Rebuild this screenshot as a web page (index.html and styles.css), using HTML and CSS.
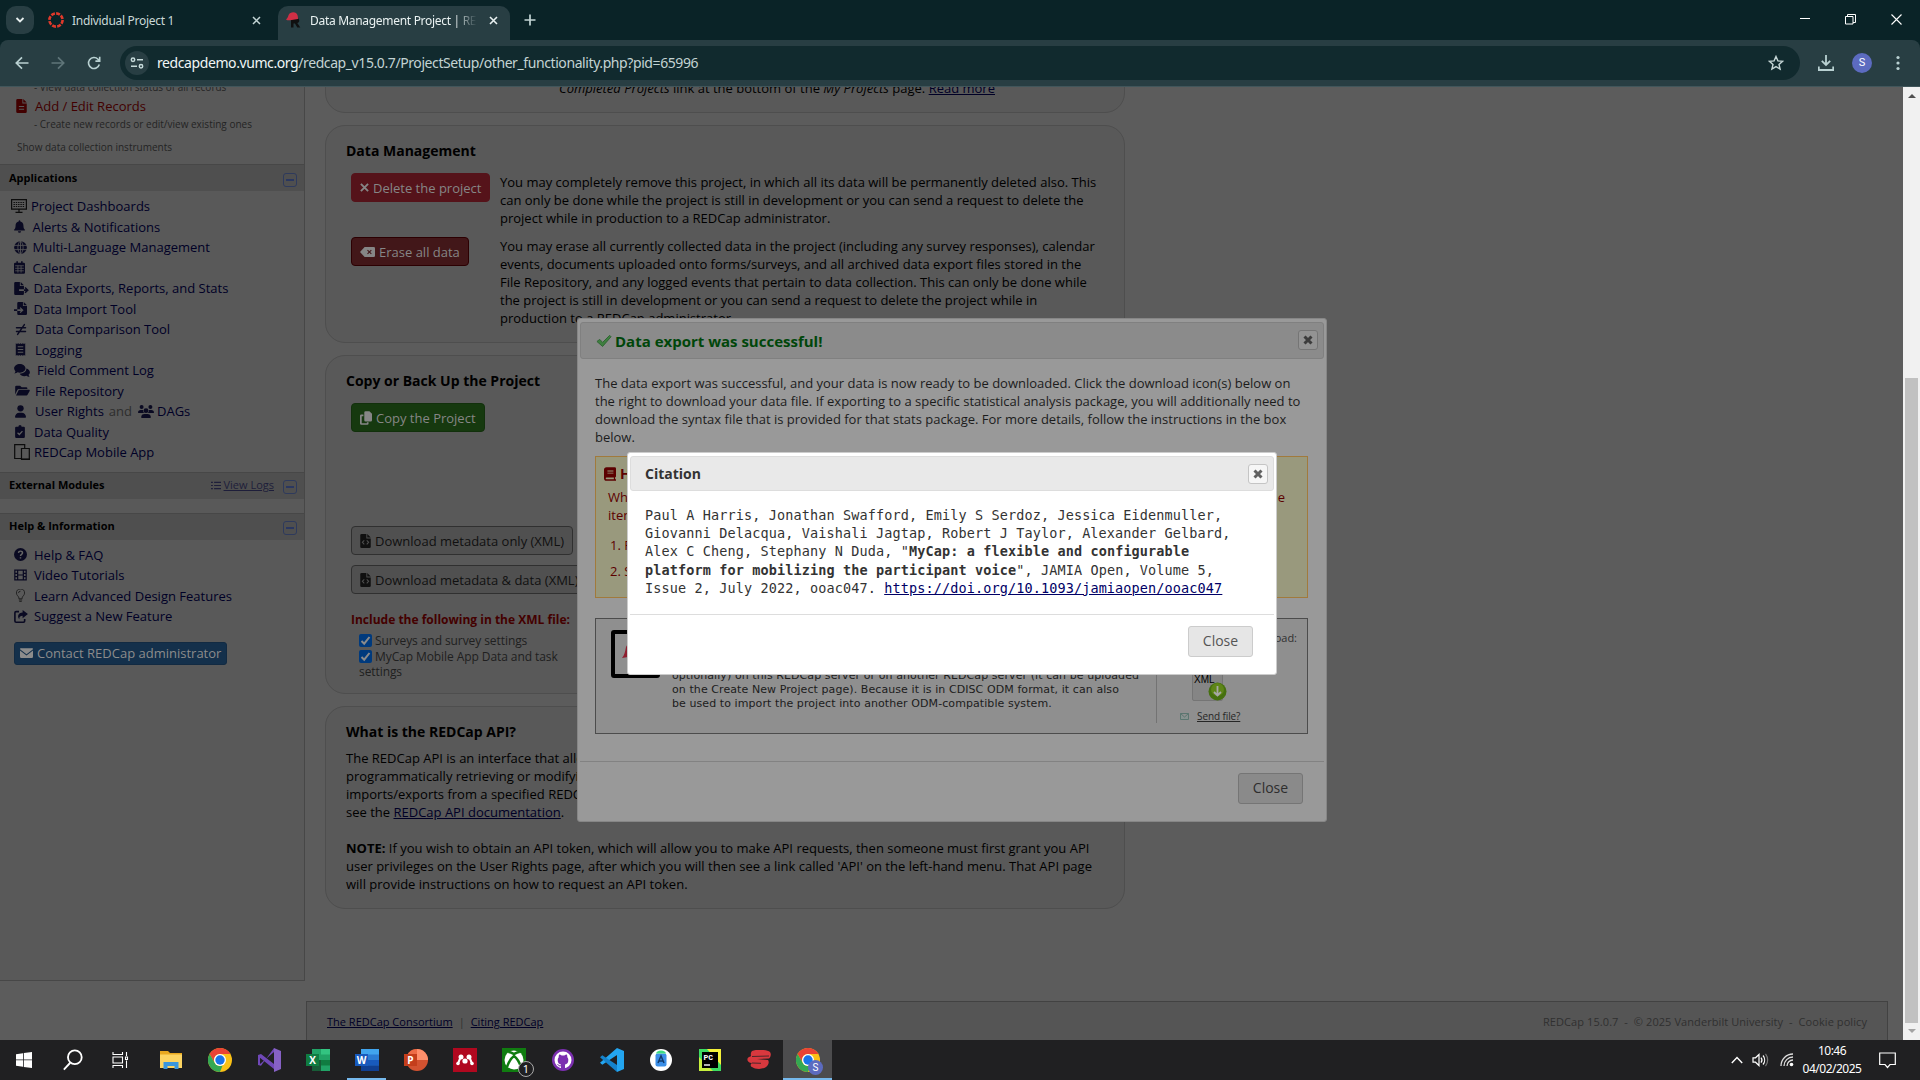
FILE: index.html
```html
<!DOCTYPE html>
<html lang="en">
<head>
<meta charset="utf-8">
<title>Data Management Project | REDCap</title>
<link rel="stylesheet" href="styles.css">
</head>
<body>
<svg class="defs" aria-hidden="true">
  <symbol id="file" viewBox="0 0 12 16"><path d="M2 0h5v5h5v9.500a1.500 1.500 0 0 1-1.500 1.500h-9A1.500 1.500 0 0 1 0 14.500v-13A1.500 1.500 0 0 1 1.500 0zM8 0l4 4H8zM3 8v1.200h6V8zm0 3v1.200h6V11z" fill-rule="evenodd"/></symbol>
  <symbol id="code" viewBox="0 0 12 16"><path d="M1.500 0H7v5h5v9.500a1.500 1.500 0 0 1-1.500 1.500h-9A1.500 1.500 0 0 1 0 14.500v-13A1.500 1.500 0 0 1 1.500 0zM8 0l4 4H8zM5 7.600L4.200 6.800 1.600 9.500l2.600 2.700.8-.8-1.800-1.900zm2 0l1.800 1.900L7 11.400l.8.8 2.600-2.700-2.600-2.700z" fill-rule="evenodd"/></symbol>
  <symbol id="board" viewBox="0 0 16 14"><path d="M.6.6h14.800v9.600H.6zM8 10v3M4.500 13.300h7" fill="none" stroke="currentColor" stroke-width="1.200"/><path d="M2.500 3.500h11M2.500 5.500h11M2.500 7.500h11" stroke="currentColor" stroke-width="1.200" stroke-dasharray="1.400 .9"/></symbol>
  <symbol id="bell" viewBox="0 0 14 16"><path d="M7 0a1 1 0 0 1 1 1v.7c2.300.5 4 2.500 4 4.900 0 3 .8 4.200 1.700 5.200.5.600.1 1.400-.7 1.400H1c-.8 0-1.200-.8-.7-1.400C1.200 10.800 2 9.600 2 6.600c0-2.400 1.700-4.400 4-4.900V1a1 1 0 0 1 1-1zM5 14h4a2 2 0 0 1-4 0z"/></symbol>
  <symbol id="globe" viewBox="0 0 16 16"><circle cx="8" cy="8" r="7.800"/><path d="M0 5.400h16M0 10.600h16M8 0v16M8 0C3.700 3 3.700 13 8 16M8 0c4.300 3 4.300 13 0 16" fill="none" stroke="#595959" stroke-width="1"/></symbol>
  <symbol id="cal" viewBox="0 0 14 16"><path d="M3 0h2v2h4V0h2v2h1.500A1.500 1.500 0 0 1 14 3.500v11a1.500 1.500 0 0 1-1.500 1.500h-11A1.500 1.500 0 0 1 0 14.500v-11A1.500 1.500 0 0 1 1.500 2H3z"/><path d="M1.500 5.800h11M1.500 9h11M1.500 12.200h11M5 5.500v9M9 5.500v9" stroke="#595959" stroke-width="1" fill="none"/></symbol>
  <symbol id="export" viewBox="0 0 18 16"><path d="M1.500 0H7v5h5v4H6v2h6v3.500a1.500 1.500 0 0 1-1.500 1.500h-9A1.500 1.500 0 0 1 0 14.500v-13A1.500 1.500 0 0 1 1.500 0zM8 0l4 4H8zM12 9h2.200l-1.500-1.600 1.300-1.200L18 10l-4 3.800-1.300-1.200 1.500-1.600H12z"/></symbol>
  <symbol id="import" viewBox="0 0 16 16"><path d="M5.500 0H11v5h5v9.500a1.500 1.500 0 0 1-1.500 1.500h-9A1.500 1.500 0 0 1 4 14.500V11h4.500L7 12.500l1 1 3.800-3.500L8 6.500l-1 1L8.500 9H4V1.500A1.500 1.500 0 0 1 5.500 0zM12 0l4 4h-4zM0 9h4v2H0z"/></symbol>
  <symbol id="neq" viewBox="0 0 16 16"><path d="M2 5.500h12M2 10.500h12M12.500 1.500l-9 13" stroke="currentColor" stroke-width="2" stroke-linecap="round"/></symbol>
  <symbol id="log" viewBox="0 0 14 16"><path d="M1 0l1.500 1L4 0l1.500 1L7 0l1.500 1L10 0l1.500 1L13 0v16l-1.500-1-1.500 1-1.500-1L7 16l-1.500-1L4 16l-1.500-1L1 16zM3.500 4v1.200h7V4zm0 3.400v1.200h7V7.400zm0 3.400V12h7v-1.200z" fill-rule="evenodd"/></symbol>
  <symbol id="chat" viewBox="0 0 18 16"><path d="M6.500 1C10 1 13 3.200 13 6s-3 5-6.500 5c-.9 0-1.800-.1-2.600-.4C3 11.300 1.700 12 .3 12c.6-.7 1.100-1.700 1.200-2.600C.6 8.500 0 7.300 0 6c0-2.800 3-5 6.500-5zM14 6.200c2.300.6 4 2.300 4 4.300 0 1.200-.6 2.200-1.500 3 .1.900.6 1.700 1.200 2.300-1.400 0-2.600-.6-3.500-1.200-.8.300-1.600.4-2.500.4-2.400 0-4.500-1.100-5.300-2.800C10.500 12 14 9.800 14 6.200z"/></symbol>
  <symbol id="folder" viewBox="0 0 18 16"><path d="M0 13V3.500A1.500 1.500 0 0 1 1.500 2H6l2 2h5.500A1.500 1.500 0 0 1 15 5.500V6H4.500a2 2 0 0 0-1.700 1zM4.500 7H17c.8 0 1.200.8.800 1.500l-2.600 4.700c-.3.500-.7.800-1.300.8H1z"/></symbol>
  <symbol id="user" viewBox="0 0 14 16"><circle cx="7" cy="4" r="4"/><path d="M5.500 9.500h3A5.500 5.500 0 0 1 14 15a1 1 0 0 1-1 1H1a1 1 0 0 1-1-1 5.500 5.500 0 0 1 5.500-5.500z"/></symbol>
  <symbol id="users" viewBox="0 0 20 16"><circle cx="4.500" cy="2.500" r="2.500"/><circle cx="15.500" cy="2.500" r="2.500"/><circle cx="10" cy="7" r="3"/><path d="M0 9.500A3.500 3.500 0 0 1 3.500 6h2c.3 0 .7.100 1 .2-.2 1.500.3 2.800 1.300 3.800H.600zM20 9.500A3.500 3.500 0 0 0 16.500 6h-2c-.3 0-.7.100-1 .2.200 1.500-.3 2.800-1.300 3.800h7.200zM4 15.300A4.300 4.300 0 0 1 8.300 11h3.400a4.300 4.300 0 0 1 4.300 4.300c0 .4-.3.700-.7.700H4.700c-.4 0-.7-.3-.7-.7z"/></symbol>
  <symbol id="clip" viewBox="0 0 12 16"><path d="M4 2a2 2 0 0 1 4 0h2.500A1.500 1.500 0 0 1 12 3.500v11a1.500 1.500 0 0 1-1.500 1.500h-9A1.500 1.500 0 0 1 0 14.500v-11A1.500 1.500 0 0 1 1.500 2z"/><path d="M3 9.500l2.200 2.200L9 7.500" fill="none" stroke="#5f5f5f" stroke-width="1.500"/></symbol>
  <symbol id="mobile" viewBox="0 0 16 16"><path d="M7 14.500H.7V.7h10V4M7.500 4.500h7.800v10.800H7.500z" fill="none" stroke="currentColor" stroke-width="1.200"/><path d="M7 15.300h9" stroke="currentColor" stroke-width="1.500"/></symbol>
  <symbol id="help" viewBox="0 0 16 16"><circle cx="8" cy="8" r="8"/><path d="M5.500 6c.2-3 5.200-2.800 5 .1C10.300 7.800 8 7.900 8 9.800M8 11.300v1.700" fill="none" stroke="#666" stroke-width="1.800"/></symbol>
  <symbol id="film" viewBox="0 0 16 14"><path d="M1 1h14v12H1zM4.500 1v12M11.500 1v12M4.500 7h7M1 5h3.500M1 9h3.500M11.500 5H15M11.500 9H15" fill="none" stroke="currentColor" stroke-width="1.500"/></symbol>
  <symbol id="bulb" viewBox="0 0 12 16"><path d="M4 12V11C4 9 1 8 1 5a5 5 0 0 1 10 0c0 3-3 4-3 6v1zM4 13.500h4M4.500 15.300h3M3.500 5A2.500 2.500 0 0 1 6 2.700" fill="none" stroke="currentColor" stroke-width="1.200"/></symbol>
  <symbol id="share" viewBox="0 0 17 16"><path d="M6 2H2.500A1.500 1.500 0 0 0 1 3.500v10A1.500 1.500 0 0 0 2.500 15h9a1.500 1.500 0 0 0 1.500-1.500V11" fill="none" stroke="currentColor" stroke-width="2"/><path d="M10.500 0L17 5l-6.500 5V7C7.500 7 6 8.500 6.500 11.500 3.500 8 5 3 10.500 3z"/></symbol>
  <symbol id="mail" viewBox="0 0 16 12"><path d="M1.500 0h13A1.500 1.500 0 0 1 16 1.300L8 7.500 0 1.300A1.500 1.500 0 0 1 1.500 0zM0 2.800l8 6.200 8-6.200V10.500a1.500 1.500 0 0 1-1.500 1.500h-13A1.500 1.500 0 0 1 0 10.500z"/></symbol>
  <symbol id="list" viewBox="0 0 16 14"><path d="M0 2h3M0 7h3M0 12h3M5 2h11M5 7h11M5 12h11" stroke="currentColor" stroke-width="1.800"/></symbol>
  <symbol id="times" viewBox="0 0 10 10"><path d="M1 1l8 8M9 1L1 9" stroke="currentColor" stroke-width="2.100"/></symbol>
  <symbol id="erase" viewBox="0 0 18 12"><path d="M5.500 0h11A1.500 1.500 0 0 1 18 1.500v9a1.500 1.500 0 0 1-1.500 1.500h-11L0 6z"/><path d="M9 3.700l4.600 4.600M13.600 3.700L9 8.300" stroke="#421719" stroke-width="1.300"/></symbol>
  <symbol id="copy" viewBox="0 0 14 16"><path d="M6.500 0H11l3 3v7.500a1.500 1.500 0 0 1-1.500 1.500h-6A1.500 1.500 0 0 1 5 10.500v-9A1.500 1.500 0 0 1 6.500 0zM1.500 4H4v2H2v8h6v-1h2v1.500A1.500 1.500 0 0 1 8.500 16h-7A1.500 1.500 0 0 1 0 14.500v-9A1.500 1.500 0 0 1 1.500 4z"/></symbol>
  <symbol id="book" viewBox="0 0 14 16"><path d="M3 0h9.500A1.500 1.500 0 0 1 14 1.500v9c0 .6-.4 1-1 1.300V14h1v2H3a3 3 0 0 1-3-3V3a3 3 0 0 1 3-3zM3 12a1 1 0 0 0 0 2h8.500v-2zM4 4v1h7V4zm0 2.500v1h7v-1z" fill-rule="evenodd"/></symbol>
  <symbol id="xclose" viewBox="0 0 10 10"><path d="M1.500 1.500l7 7M8.500 1.500l-7 7" stroke="currentColor" stroke-width="3"/></symbol>
  <symbol id="chrome" viewBox="0 0 24 24"><circle cx="12" cy="12" r="12" fill="#fbc116"/><path d="M1.600 6A12 12 0 0 1 22.400 6H12a6 6 0 0 0-5.200 9z" fill="#ea4335"/><path d="M1.600 6l5.200 9a6 6 0 0 0 7.800 2.400L12 24A12 12 0 0 1 1.600 6z" fill="#34a853"/><circle cx="12" cy="12" r="6" fill="#fff"/><circle cx="12" cy="12" r="4.700" fill="#1a73e8"/></symbol>
</svg>

<div class="screen">
  <header class="tabs">
    <span class="tabmenu"><svg width="10" height="10" viewBox="0 0 10 10"><path d="M1.500 3l3.500 3.500L8.500 3" fill="none" stroke="#e6eeee" stroke-width="1.800"/></svg></span>
    <div class="tab">
      <svg width="16" height="16" viewBox="0 0 16 16"><circle cx="8" cy="8" r="6.600" fill="none" stroke="#e0392b" stroke-width="2.600" stroke-dasharray="3.900 1.280"/></svg>
      <span class="tabtext">Individual Project 1</span>
      <svg class="tx" width="9" height="9" viewBox="0 0 9 9"><path d="M1 1l7 7M8 1L1 8" stroke="#c3d5d5" stroke-width="1.500"/></svg>
    </div>
    <div class="tab active">
      <svg width="16" height="16" viewBox="0 0 16 16"><path d="M5 6h5.500c3.500 0 3.600 4.500.8 5l3 4.500h-3L9 11.500H7.500v4H5z" fill="#101010"/><path d="M0 7.500C1.500 6 2 5 2.600 3 3.500.2 8-.5 10 1c1.800 1.300 2 4 2 6L4 8.300C2.500 8.500 1 8.300 0 7.500z" fill="#cf2f45"/></svg>
      <span class="tabtext fade">Data Management Project | REDCap</span>
      <svg class="tx" width="9" height="9" viewBox="0 0 9 9"><path d="M1 1l7 7M8 1L1 8" stroke="#e8f0f0" stroke-width="1.600"/></svg>
    </div>
    <svg class="plus" width="12" height="12" viewBox="0 0 12 12"><path d="M6 .5v11M.5 6h11" stroke="#c3d5d5" stroke-width="1.700"/></svg>
    <div class="winctl">
      <svg width="10" height="11" viewBox="0 0 10 11"><path d="M0 4.500h10" stroke="#fff"/></svg>
      <svg width="11" height="11" viewBox="0 0 11 11"><path d="M.5 2.500h7.500v7.500H.5zM2.500 2.500v-2h8v8H8" fill="none" stroke="#fff"/></svg>
      <svg width="11" height="11" viewBox="0 0 11 11"><path d="M.5.5l10 10M10.500.5l-10 10" stroke="#fff" stroke-width="1.100"/></svg>
    </div>
  </header>

  <div class="toolbar">
    <svg width="14" height="14" viewBox="0 0 14 14"><path d="M13.500 7H1.500M7 1.300L1.300 7 7 12.700" fill="none" stroke="#b9d1d2" stroke-width="1.700"/></svg>
    <svg width="14" height="14" viewBox="0 0 14 14"><path d="M.5 7h12M7 1.300L12.700 7 7 12.700" fill="none" stroke="#5f7579" stroke-width="1.700"/></svg>
    <svg width="14" height="14" viewBox="0 0 14 14"><path d="M12.300 8.500A5.500 5.500 0 1 1 11 3.200L12.500 4.800M12.700.8v4.300H8.400" fill="none" stroke="#b9d1d2" stroke-width="1.600"/></svg>
    <div class="omni">
      <span class="site"><svg width="14" height="12" viewBox="0 0 14 12"><g fill="none" stroke="#c6dada" stroke-width="1.500"><circle cx="3" cy="2.800" r="1.700"/><path d="M7 2.800h6M1 9.200h6"/><circle cx="11" cy="9.200" r="1.700"/></g></svg></span>
      <span class="url"><b>redcapdemo.vumc.org</b>/redcap_v15.0.7/ProjectSetup/other_functionality.php?pid=65996</span>
      <svg class="star" width="16" height="16" viewBox="0 0 16 16"><path d="M8 1.500l1.900 4.400 4.700.4-3.600 3.100 1.100 4.700L8 11.600l-4.100 2.500L5 9.400 1.400 6.300l4.700-.4z" fill="none" stroke="#c6d6d6" stroke-width="1.400"/></svg>
    </div>
    <svg class="dl" width="16" height="16" viewBox="0 0 16 16"><path d="M8 0v9.500M3.800 5.800L8 10l4.200-4.200M.8 11.500V15h14.400v-3.500" fill="none" stroke="#b9d1d2" stroke-width="1.800"/></svg>
    <span class="avatar">S</span>
    <svg class="dots" width="4" height="16" viewBox="0 0 4 16" fill="#b9d1d2"><circle cx="2" cy="2.500" r="1.600"/><circle cx="2" cy="8" r="1.600"/><circle cx="2" cy="13.500" r="1.600"/></svg>
  </div>

  <div class="view">
    <nav class="side">
      <div class="sub first">- View data collection status of all records</div>
      <div class="addedit"><svg width="11" height="14"><use href="#file"/></svg>Add / Edit Records</div>
      <div class="sub">- Create new records or edit/view existing ones</div>
      <div class="sub show">Show data collection instruments</div>
      <div class="shead">Applications<span class="minus"></span></div>
      <div class="menu">
        <a class="p"><i><svg class="dark" width="16" height="14"><use href="#board"/></svg></i>Project Dashboards</a>
        <a class="a"><i><svg width="11" height="13"><use href="#bell"/></svg></i>Alerts &amp; Notifications</a>
        <a class="a"><i><svg width="13" height="13"><use href="#globe"/></svg></i>Multi-Language Management</a>
        <a class="a"><i><svg width="11" height="13"><use href="#cal"/></svg></i>Calendar</a>
        <a class="b"><i><svg width="15" height="13"><use href="#export"/></svg></i>Data Exports, Reports, and Stats</a>
        <a class="b"><i><svg width="13" height="13"><use href="#import"/></svg></i>Data Import Tool</a>
        <a class="c"><i><svg width="12" height="13"><use href="#neq"/></svg></i>Data Comparison Tool</a>
        <a class="c"><i><svg width="11" height="13"><use href="#log"/></svg></i>Logging</a>
        <a class="d"><i><svg width="16" height="14"><use href="#chat"/></svg></i>Field Comment Log</a>
        <a class="c"><i><svg width="15" height="13"><use href="#folder"/></svg></i>File Repository</a>
        <a class="c"><i><svg width="11" height="13"><use href="#user"/></svg></i>User Rights<em>and</em><svg class="dags" width="16" height="13"><use href="#users"/></svg>DAGs</a>
        <a><i><svg width="12" height="13"><use href="#clip"/></svg></i>Data Quality</a>
        <a><i><svg class="dark" width="16" height="16"><use href="#mobile"/></svg></i>REDCap Mobile App</a>
      </div>
      <div class="shead ext">External Modules<span class="logs"><svg width="10" height="9"><use href="#list"/></svg><u>View Logs</u></span><span class="minus"></span></div>
      <div class="shead">Help &amp; Information<span class="minus"></span></div>
      <div class="menu help">
        <a><i><svg width="13" height="13"><use href="#help"/></svg></i>Help &amp; FAQ</a>
        <a><i><svg width="13" height="12"><use href="#film"/></svg></i>Video Tutorials</a>
        <a><i><svg class="grey" width="13" height="13"><use href="#bulb"/></svg></i>Learn Advanced Design Features</a>
        <a><i><svg width="14" height="13"><use href="#share"/></svg></i>Suggest a New Feature</a>
      </div>
      <div class="contact"><svg width="13" height="10"><use href="#mail"/></svg>Contact REDCap administrator</div>
    </nav>

    <main class="main">
      <section class="card top"><p><i>Completed Projects</i> link at the bottom of the <i>My Projects</i> page. <u>Read more</u></p></section>

      <section class="card dm">
        <h2>Data Management</h2>
        <div class="row r1">
          <div class="btncol"><span class="btn red"><svg width="9" height="9"><use href="#times"/></svg>Delete the project</span></div>
          <p>You may completely remove this project, in which all its data will be permanently deleted also. This<br>can only be done while the project is still in development or you can send a request to delete the<br>project while in production to a REDCap administrator.</p>
        </div>
        <div class="row">
          <div class="btncol"><span class="btn darkred"><svg width="15" height="10"><use href="#erase"/></svg>Erase all data</span></div>
          <p>You may erase all currently collected data in the project (including any survey responses), calendar<br>events, documents uploaded onto forms/surveys, and all archived data export files stored in the<br>File Repository, and any logged events that pertain to data collection. This can only be done while<br>the project is still in development or you can send a request to delete the project while in<br>production to a REDCap administrator.</p>
        </div>
      </section>

      <section class="card backup">
        <h2>Copy or Back Up the Project</h2>
        <span class="btn green"><svg width="12" height="14"><use href="#copy"/></svg>Copy the Project</span>
        <span class="btn plain m1"><svg width="11" height="14"><use href="#code"/></svg>Download metadata only (XML)</span>
        <span class="btn plain"><svg width="11" height="14"><use href="#code"/></svg>Download metadata &amp; data (XML)</span>
        <div class="incl">Include the following in the XML file:</div>
        <div class="opts">
          <div><span class="cb"><svg width="11" height="11" viewBox="0 0 11 11"><path d="M1.500 6l2.700 2.700L9.500 2" fill="none" stroke="#8b8b8b" stroke-width="2"/></svg></span>Surveys and survey settings</div>
          <div><span class="cb"><svg width="11" height="11" viewBox="0 0 11 11"><path d="M1.500 6l2.700 2.700L9.500 2" fill="none" stroke="#8b8b8b" stroke-width="2"/></svg></span>MyCap Mobile App Data and task</div>
          <div>settings</div>
        </div>
      </section>

      <section class="card api">
        <h2>What is the REDCap API?</h2>
        <p>The REDCap API is an interface that allows external<br>programmatically retrieving or modifying data<br>imports/exports from a specified REDCap project<br>see the <u>REDCap API documentation</u>.</p>
        <p><b>NOTE:</b> If you wish to obtain an API token, which will allow you to make API requests, then someone must first grant you API<br>user privileges on the User Rights page, after which you will then see a link called 'API' on the left-hand menu. That API page<br>will provide instructions on how to request an API token.</p>
      </section>
      <footer class="foot"><span><u>The REDCap Consortium</u><em>|</em><u>Citing REDCap</u></span><span class="ver">REDCap 15.0.7 &nbsp;-&nbsp; © 2025 Vanderbilt University &nbsp;-&nbsp; Cookie policy</span></footer>
    </main>

    <div class="scroll"><span class="up"></span><span class="thumb"></span><span class="down"></span></div>
  </div>

  <div class="taskbar">
    <span class="app"><svg width="16" height="16" viewBox="0 0 16 16" fill="#fff"><path d="M0 2.200l7-1v6.300H0zM7.800 1.100L16 0v7.500H7.800zM0 8.300h7v6.400l-7-1zM7.800 8.300H16V16l-8.200-1.100z"/></svg></span>
    <span class="app"><svg width="22" height="22" viewBox="0 0 24 24" fill="none" stroke="#fff" stroke-width="2"><circle cx="14" cy="9" r="7.500"/><path d="M9 15l-7 7.500"/></svg></span>
    <span class="app tv"><svg width="17" height="16" viewBox="0 0 17 16" fill="none" stroke="#fff" stroke-width="1.100"><path d="M1 0v2.500h9.500V0M1 16v-2.500h9.500V16M1 5h9.500v6H1zM14.500 0v4M14.500 8.500V16"/><path d="M13.500 5h2v2.500h-2z"/></svg></span>
    <span class="app"><svg width="22" height="20" viewBox="0 0 22 20"><path d="M0 1h8l2 2h12v15H0z" fill="#e8a820"/><path d="M0 4.500h22V18H0z" fill="#fcd462"/><path d="M3.500 19v-7h15v7h-4v-3h-7v3z" fill="#3a96dd"/></svg></span>
    <span class="app"><svg width="24" height="24"><use href="#chrome"/></svg></span>
    <span class="app"><svg width="24" height="24" viewBox="0 0 24 24"><path d="M17 0l7 3v18l-7 3z" fill="#8661c5"/><path d="M1 7l3-1 13 10v5L2 9v7l-1-.8zM1 17V7l2 1v8l14-12V0L4 17.800z" fill="#7048b8"/></svg></span>
    <span class="app"><svg width="24" height="22" viewBox="0 0 24 22"><path d="M6 0h18v22H6z" fill="#21a366"/><path d="M6 11h9v11H6z" fill="#185c37"/><path d="M15 11h9v5.500h-9z" fill="#107c41"/><path d="M15 0h9v5.500h-9z" fill="#33c481"/><path d="M0 5h13v12H0z" fill="#107c41"/><text x="6.500" y="14.800" class="office">X</text></svg></span>
    <span class="app run"><svg width="24" height="22" viewBox="0 0 24 22"><path d="M6 0h18v22H6z" fill="#2b7cd3"/><path d="M6 0h18v5.500H6z" fill="#41a5ee"/><path d="M6 11h18v5.500H6z" fill="#185abd"/><path d="M6 16.500h18V22H6z" fill="#103f91"/><path d="M0 5h13v12H0z" fill="#185abd"/><text x="6.500" y="14.800" class="office">W</text></svg></span>
    <span class="app"><svg width="24" height="22" viewBox="0 0 24 22"><circle cx="13" cy="11" r="11" fill="#d35230"/><path d="M13 0a11 11 0 0 1 11 11H13z" fill="#ff8f6b"/><path d="M13 0v11H2A11 11 0 0 1 13 0z" fill="#ed6c47"/><path d="M0 5h13v12H0z" fill="#c43e1c"/><text x="6.500" y="14.800" class="office">P</text></svg></span>
    <span class="app"><svg width="24" height="24" viewBox="0 0 24 24"><path d="M0 0h24v24H0z" fill="#b0081f"/><g fill="#fff"><circle cx="8" cy="9" r="2.500"/><circle cx="16" cy="9" r="2.500"/><circle cx="5" cy="15.500" r="1.800"/><circle cx="12" cy="13" r="2.600"/><circle cx="19" cy="15.500" r="1.800"/></g><path d="M5 15.500l2.500-6M19 15.500l-2.500-6" stroke="#fff" stroke-width="2"/></svg></span>
    <span class="app xb"><svg width="24" height="24" viewBox="0 0 24 24"><path d="M0 0h24v24H0z" fill="#107c10"/><circle cx="12" cy="12" r="9.500" fill="#fff"/><path d="M5 19C7 13 10 9.500 12 8c2 1.500 5 5 7 11M6 4c2-.5 4 .8 6 2 2-1.200 4-2.500 6-2" fill="none" stroke="#107c10" stroke-width="2.500"/></svg><span class="count">1</span></span>
    <span class="app"><svg width="22" height="22" viewBox="0 0 22 22"><circle cx="11" cy="11" r="11" fill="#7b2fb0"/><circle cx="11" cy="11" r="8.500" fill="#fff"/><path d="M9 20v-4.500c-2-.5-3.300-1.500-3.300-4.500 0-1.200.4-2 1-2.700-.1-.9 0-1.900.4-2.800 1 0 1.800.5 2.600 1a9 9 0 0 1 2.600 0c.8-.5 1.600-1 2.600-1 .4.900.5 1.900.4 2.800.6.700 1 1.500 1 2.700 0 3-1.300 4-3.300 4.500V20z" fill="#7b2fb0"/><path d="M5.500 15l1.500 1.800H9" fill="none" stroke="#7b2fb0"/></svg></span>
    <span class="app"><svg width="24" height="24" viewBox="0 0 24 24"><path d="M0 14.800L17 0v7L2.300 16.800zM17 0l7 3v18l-7 3z" fill="#23a5f0"/><path d="M0 9.200L17 24v-7L2.300 7.200z" fill="#1583cc"/></svg></span>
    <span class="app"><svg width="22" height="22" viewBox="0 0 22 22"><circle cx="11" cy="11" r="11" fill="#fff"/><rect x="5.500" y="4.500" width="11" height="13" rx="2" fill="#3b8fe8"/><path d="M8 14l3-7 3 7M9 12h4" fill="none" stroke="#123a6b" stroke-width="1.500"/><path d="M6 4.500a5 3 0 0 1 10 0z" fill="#3ddc84"/></svg></span>
    <span class="app"><svg width="22" height="22" viewBox="0 0 22 22"><path d="M0 0h22v22H0z" fill="#3ddc62"/><path d="M8 0h14v16z" fill="#f4f13a"/><path d="M0 8v14h14z" fill="#c8f03e"/><path d="M3 3h16v16H3z" fill="#000"/><text x="4.500" y="11" class="pc">PC</text><path d="M5 16h6" stroke="#fff" stroke-width="1.400"/></svg></span>
    <span class="app"><svg width="24" height="20" viewBox="0 0 24 20"><path d="M5 1c4-2 15-1.500 18 1 1.500 2 .8 5-1 6.500L10 9l11 1c1.500 2 .5 5-2 7-3 2.500-11 2.500-14 0-2-1-1.500-3 0-4C-.5 13-.5 8 2 7c1-.5 2-.5 2-1-.5-2 0-4 1-5z" fill="#d8383e"/><path d="M5 6.500l17-.5M5 13l9 .3" stroke="#262224" stroke-width=".8"/></svg></span>
    <span class="app sel"><svg width="24" height="24"><use href="#chrome"/></svg><span class="badge">S</span></span>
    <div class="tray">
      <svg class="t1" width="12" height="8" viewBox="0 0 12 8"><path d="M.8 7L6 1.500 11.200 7" fill="none" stroke="#fff" stroke-width="1.400"/></svg>
      <svg class="t2" width="17" height="14" viewBox="0 0 17 14"><path d="M1 4.800h2.500L7 1.500v11L3.500 9.200H1z" fill="none" stroke="#fff" stroke-width="1.200"/><path d="M9 4.500a4 4 0 0 1 0 5M11 2.500a7 7 0 0 1 0 9" fill="none" stroke="#fff" stroke-width="1.200"/><path d="M13.500.8a10 10 0 0 1 0 12.400" fill="none" stroke="#777" stroke-width="1.200"/></svg>
      <svg class="t3" width="14" height="14" viewBox="0 0 14 14"><path d="M1 13A12 12 0 0 1 13 1M4 13a9 9 0 0 1 9-9M7 13a6 6 0 0 1 6-6" fill="none" stroke="#ddd" stroke-width="1.300"/><circle cx="11.500" cy="11.500" r="1.800" fill="#fff"/></svg>
      <div class="clock">10:46<br>04/02/2025</div>
      <svg class="t4" width="17" height="17" viewBox="0 0 17 17"><path d="M.7 1h15.600v11.500H11L8.500 15.500 6 12.500H.7z" fill="none" stroke="#fff" stroke-width="1.200"/></svg>
    </div>
  </div>

  <div class="dialog outer">
    <div class="dtitle"><svg width="16" height="14" viewBox="0 0 17 14"><path d="M1 7.500l3-2.200L7 8.500 14.500 1l1.500 1.500L7 12.800z" fill="#3f7f3f" stroke="#2f6433"/></svg><span>Data export was successful!</span><b class="x"><svg width="10" height="10"><use href="#xclose"/></svg></b></div>
    <div class="dbody">
      <p>The data export was successful, and your data is now ready to be downloaded. Click the download icon(s) below on<br>the right to download your data file. If exporting to a specific statistical analysis package, you will additionally need to<br>download the syntax file that is provided for that stats package. For more details, follow the instructions in the box<br>below.</p>
      <div class="howto">
        <h3><svg width="12" height="14"><use href="#book"/></svg>How</h3>
        <div class="two"><span>When<br>items</span><span>the</span></div>
        <p class="step">1. Please</p>
        <p class="step">2. See</p>
      </div>
      <div class="file">
        <div class="logo"><svg width="28" height="30" viewBox="0 0 28 30"><path d="M1 20c2.500-3 3-6 4-11 2-5 9-6 12-2l2 10z" fill="#8f1f30"/></svg></div>
        <p>optionally) on this REDCap server or on another REDCap server (it can be uploaded<br>on the Create New Project page). Because it is in CDISC ODM format, it can also<br>be used to import the project into another ODM-compatible system.</p>
        <div class="get">
          <span class="lab">Download:</span>
          <div class="xml">XML<svg width="19" height="19" viewBox="0 0 19 19"><circle cx="9.500" cy="9.500" r="9" fill="#46700f"/><circle cx="9.500" cy="7.500" r="6.500" fill="#5e8518"/><path d="M9.500 4v9M6 10l3.500 3.500L13 10" fill="none" stroke="#a8a8a8" stroke-width="1.800"/></svg></div>
          <div class="send"><svg width="9" height="7" viewBox="0 0 9 7"><path d="M.5.5h8v6h-8zM.5.5l4 3.500 4-3.500" fill="#87928f" stroke="#5b7670"/></svg><u>Send file?</u></div>
        </div>
      </div>
    </div>
    <div class="dfoot"><span class="close">Close</span></div>
  </div>

  <div class="dialog inner">
    <div class="dtitle"><span>Citation</span><b class="x"><svg width="10" height="10"><use href="#xclose"/></svg></b></div>
    <p class="cite">Paul A Harris, Jonathan Swafford, Emily S Serdoz, Jessica Eidenmuller,<br>Giovanni Delacqua, Vaishali Jagtap, Robert J Taylor, Alexander Gelbard,<br>Alex C Cheng, Stephany N Duda, "<b>MyCap: a flexible and configurable</b><br><b>platform for mobilizing the participant voice</b>", JAMIA Open, Volume 5,<br>Issue 2, July 2022, ooac047. <u>https://doi.org/10.1093/jamiaopen/ooac047</u></p>
    <div class="dfoot"><span class="close">Close</span></div>
  </div>
</div>
</body>
</html>
```
FILE: styles.css
```css
* { box-sizing: border-box; }
body { margin: 0; background: #5c5c5c; font: 13px/18px "Open Sans", "Noto Sans", sans-serif; color: #000; overflow: hidden; }
p, h2, h3 { margin: 0; padding: 0; white-space: nowrap; }
svg { flex: none; }
svg:not([fill]) { fill: currentColor; }
.defs { position: absolute; width: 0; height: 0; }
.screen { position: relative; width: 1920px; height: 1080px; display: flex; flex-direction: column; overflow: hidden; }

/* browser chrome */
.tabs { height: 40px; background: #0a2327; display: flex; align-items: flex-end; font: 12px/16px "Noto Sans", sans-serif; color: #c9d8d8; }
.tabmenu { width: 28px; height: 28px; margin: 0 0 6px 6px; border-radius: 10px; background: #283e43; display: flex; align-items: center; justify-content: center; }
.tab { height: 34px; display: flex; align-items: center; padding: 0 0 6px 14px; width: 244px; }
.tab .tabtext { margin-left: 8px; flex: 1; white-space: nowrap; overflow: hidden; letter-spacing: -.3px; padding-top: 1px; }
.tab .tx { margin-right: 17px; }
.tab.active { width: 232px; background: #283e43; border-radius: 10px 10px 0 0; color: #eaf2f2; padding-left: 8px; }
.tab.active .tx { margin: 0 12px 0 12px; }
.tabtext.fade { -webkit-mask-image: linear-gradient(90deg, #000 86%, transparent); mask-image: linear-gradient(90deg, #000 86%, transparent); }
.plus { margin: 0 0 14px 14px; }
.winctl { margin-left: auto; display: flex; gap: 35px; padding: 0 18px 15px 0; }
.toolbar { height: 47px; background: #283e43; border-bottom: 1px solid #41565b; display: flex; align-items: center; padding: 0 20px 1px 15px; border-radius: 8px 8px 0 0; gap: 22px; box-shadow: 0 -8px 0 0 #0a2327; clip-path: inset(0); }
.omni { width: 1680px; height: 34px; margin-left: -3px; border-radius: 17px; background: #112a2e; display: flex; align-items: center; padding: 0 16px 0 5px; }
.site { width: 24px; height: 24px; border-radius: 50%; background: #283e43; display: flex; align-items: center; justify-content: center; }
.url { font: 14px/20px "Noto Sans", sans-serif; color: #c3d3d3; margin-left: 8px; flex: 1; letter-spacing: -.41px; white-space: nowrap; }
.url b { font-weight: 400; color: #f0f6f6; }
.dl { margin-left: -4px; }
.avatar { width: 20px; height: 20px; margin-left: -4px; border-radius: 50%; background: #5c6bc0; color: #fff; font: 11px/20px Roboto, sans-serif; text-align: center; }
.dots { margin-left: 2px; }

/* page */
.view { height: 953px; display: flex; }
.side { width: 305px; height: 894px; background: #595959; border-right: 1px solid #474747; border-bottom: 1px solid #474747; white-space: nowrap; overflow: hidden; color: #000026; }
.sub { font-size: 10px; line-height: 16px; padding-left: 34px; color: #242424; }
.sub.first { margin-top: -8px; }
.addedit { display: flex; align-items: center; height: 20px; margin: 1px 0 0; padding-left: 16px; gap: 8px; color: #420000; }
.sub.show { padding: 6px 0 0 17px; margin-bottom: 8px; line-height: 18px; }
.shead { height: 27px; background: #4f4f4f; border-top: 1px solid #474747; font-size: 11px; font-weight: 700; line-height: 24px; padding: 0 7px 1px 9px; display: flex; align-items: center; color: #000; }
.minus { width: 14px; height: 14px; margin: 4px 0 0 auto; border: 1px solid #2e3a5c; border-radius: 3px; display: flex; align-items: center; justify-content: center; }
.minus::before { content: ""; width: 8px; height: 2px; background: #2a3760; }
.ext { margin-bottom: 14px; }
.logs { margin-left: auto; font-weight: 400; display: flex; align-items: center; gap: 3px; color: #1e1e3a; }
.logs u { color: #1e1e3a; }
.logs + .minus { margin-left: 9px; }
.menu { padding: 5px 0 9px 14px; }
.menu a { height: 20.500px; display: flex; align-items: center; }
.menu i { width: 20px; display: flex; align-items: center; color: #0a0a22; }
.menu .p { margin-left: -3px; }
.menu .a i { width: 18.500px; }
.menu .b i { width: 19.500px; }
.menu .c i { width: 21px; padding-left: 1px; }
.menu .d i { width: 23px; }
.menu em { font-style: normal; color: #2d2d2d; margin: 0 6px 0 5px; }
.menu .dags { margin-right: 3px; color: #0a0a22; }
.menu .dark { color: #0c0c0c; }
.menu .grey { color: #222; }
.help { padding: 5px 0 15px 14px; }
.contact { width: 213px; height: 23px; margin-left: 14px; border-radius: 3px; background: #14304b; border: 1px solid #122a42; color: #8c8c8c; display: flex; align-items: center; gap: 4px; padding-left: 5px; }

.main { width: 1598px; display: flex; flex-direction: column; padding-left: 1px; overflow: hidden; }
.card { width: 800px; margin-left: 19px; border: 1px solid #4e4e4e; border-radius: 20px; background: #595959; padding: 15px 20px 0; flex: none; }
.card h2 { font-size: 14px; line-height: 20px; font-weight: 700; }
.top { height: 46px; margin-top: -20px; padding: 11px 0 0 233px; }
.dm { height: 218px; margin-top: 12px; }
.backup { height: 339px; margin-top: 12px; display: flex; flex-direction: column; align-items: flex-start; }
.api { height: 203px; margin-top: 12px; }
.api p { margin: 7px 0 18px; }
.row { display: flex; margin-top: 10px; }
.row.r1 { margin-top: 12px; }
.btncol { width: 154px; padding-left: 5px; }
.btn { height: 29px; display: inline-flex; align-items: center; gap: 4px; padding: 0 8px; border-radius: 4px; border: 1px solid; white-space: nowrap; color: #868686; flex: none; }
.red { background: #55131a; border-color: #55131a; }
.darkred { background: #421719; border-color: #2c0002; }
.green { background: #16390f; border-color: #12300c; margin: 12px 0 0 5px; }
.plain { background: #505050; border-color: #303030; color: #101010; margin: 10px 0 0 5px; }
.m1 { margin-top: 94px; }
.incl { font-weight: 700; color: #440000; margin: 17px 0 4px 5px; font-size: 12px; }
.opts { margin-left: 13px; color: #202020; font-size: 12px; line-height: 15px; letter-spacing: -.08px; }
.opts div { display: flex; align-items: center; gap: 3px; height: 15.500px; }
.cb { width: 13px; height: 13px; background: #003a7d; border-radius: 2px; display: flex; padding: 1px; }
u { color: #000026; }
.foot { height: 39px; margin-top: auto; width: 1582px; border: 1px solid #424242; border-bottom: 0; background: #555; display: flex; justify-content: space-between; padding: 11px 20px 0; font-size: 11px; line-height: 18px; }
.foot em { font-style: normal; margin: 0 6px; color: #303030; }
.ver { color: #303030; letter-spacing: .08px; }
.scroll { width: 17px; background: #f1f1f1; display: flex; flex-direction: column; align-items: center; }
.up, .down { border: 4px solid transparent; }
.up { border-top: 0; border-bottom: 4px solid #505050; margin-top: 7px; }
.thumb { width: 13px; height: 645px; margin-top: 280px; background: #c1c1c1; }
.down { border-bottom: 0; border-top: 4px solid #a3a3a3; margin-top: 6px; }

/* taskbar */
.taskbar { height: 40px; background: #202022; display: flex; color: #fff; font: 12px/18px "Noto Sans", sans-serif; }
.app { position: relative; width: 49px; height: 40px; display: flex; align-items: center; justify-content: center; flex: none; }
.app:first-child { width: 48px; }
.tv { padding-right: 3px; }
.run { width: 39px; margin: 0 5px; border-bottom: 2px solid #76b9ed; padding-top: 2px; }
.sel { background: #4c4c4e; border-bottom: 2px solid #76b9ed; padding-top: 2px; }
.badge { position: absolute; right: 9px; bottom: 3px; width: 15px; height: 15px; border-radius: 50%; background: #5c6bc0; font: 10px/15px Roboto, sans-serif; text-align: center; }
.count { position: absolute; right: 4px; bottom: 3px; width: 16px; height: 16px; border-radius: 50%; background: #202022; border: 1px solid #aaa; font-size: 11px; line-height: 14px; text-align: center; }
.office { font: 700 10px "Open Sans", sans-serif; fill: #fff; text-anchor: middle; }
.pc { font: 700 8px "Liberation Mono", monospace; fill: #fff; }
.tray { margin-left: auto; display: flex; align-items: center; padding-right: 24px; }
.t2 { margin-left: 9px; }
.t3 { margin-left: 11px; }
.clock { text-align: center; width: 66px; margin: 0 14px 0 5px; font-size: 12px; line-height: 18px; letter-spacing: -.5px; }

/* dialogs float over the page */
.dialog { position: absolute; border-radius: 3px; padding: 3px 2px; display: flex; flex-direction: column; }
.dtitle { height: 36px; flex: none; border: 1px solid; border-radius: 3px; display: flex; align-items: center; padding: 0 5px 0 15px; font-weight: 700; }
.x { margin-left: auto; width: 20px; height: 20px; border: 1px solid; border-radius: 3px; display: flex; align-items: center; justify-content: center; }
.dfoot { border-top: 1px solid; display: flex; justify-content: flex-end; margin-top: auto; }
.close { width: 65px; height: 31px; border: 1px solid; border-radius: 3px; font-size: 14px; line-height: 28px; text-align: center; }
.outer { left: 577px; top: 318px; width: 750px; height: 504px; background: #999; border: 1px solid #868686; color: #1c1c1c; }
.outer .dtitle { background: #8b8b8b; border-color: #808080; font-size: 15px; color: #00460a; height: 37px; }
.outer .dtitle span { margin-left: 3px; }
.outer .x { background: #939393; border-color: #757575; color: #3c3c3c; margin-bottom: 2px; }
.outer .dfoot { height: 57px; border-color: #828282; padding: 11px 21px 0 0; }
.outer .close { background: #8a8a8a; border-color: #757575; color: #2e2e2e; }
.dbody { padding: 15px 16px 0 15px; }
.howto { height: 142px; margin-top: 10px; background: #99997d; border: 1px solid #a17a3c; color: #5c0000; padding: 8px 8px 0; }
.howto h3 { display: flex; align-items: center; gap: 4px; font-size: 14px; line-height: 18px; }
.two { display: flex; justify-content: space-between; padding: 5px 14px 0 4px; }
.step { padding: 12px 0 0 6px; }
.step + .step { padding-top: 8px; }
.file { height: 116px; margin-top: 20px; background: #8f8f8f; border: 1px solid #4c4c4c; display: flex; }
.logo { width: 49px; height: 48px; margin: 11px 0 0 15px; border: 4px solid #000; border-radius: 3px; padding: 4px 6px; flex: none; }
.file p { width: 484px; flex: none; margin: 50px 0 0 12px; font: 11px/14px "DejaVu Sans", sans-serif; letter-spacing: .08px; }
.get { border-left: 1px solid #737373; height: 94px; margin-top: 10px; flex: 1; display: flex; flex-direction: column; padding-left: 23px; font-size: 11px; line-height: 18px; }
.lab { align-self: flex-end; margin-right: 10px; color: #303030; white-space: nowrap; }
.xml { width: 31px; height: 48px; margin: 6px 0 0 12px; background: #858585; border: 1px solid #757575; border-radius: 2px; position: relative; font: 10px/14px "Liberation Sans", sans-serif; padding: 19px 0 0 1px; color: #000; }
.xml svg { position: absolute; right: -5px; bottom: -1px; }
.send { display: flex; align-items: center; gap: 8px; font-size: 10px; height: 14px; margin-top: 8px; letter-spacing: -.1px; }
.send u { color: #262626; }
.inner { left: 627px; top: 452px; width: 650px; height: 223px; background: #fff; border: 1px solid #ccc; color: #333; }
.inner .dtitle { height: 35px; background: #e9e9e9; border-color: #ddd; font-size: 14px; padding-left: 14px; }
.inner .x { background: #f6f6f6; border-color: #c5c5c5; color: #616161; }
.cite { padding: 15px 15px 0; font: 13.500px/18.200px "DejaVu Sans Mono", monospace; letter-spacing: .12px; }
.cite u { color: #000066; }
.inner .dfoot { height: 57px; border-color: #ddd; padding: 11px 21px 0 0; }
.inner .close { background: #e6e6e6; border-color: #ccc; color: #555; }
```
